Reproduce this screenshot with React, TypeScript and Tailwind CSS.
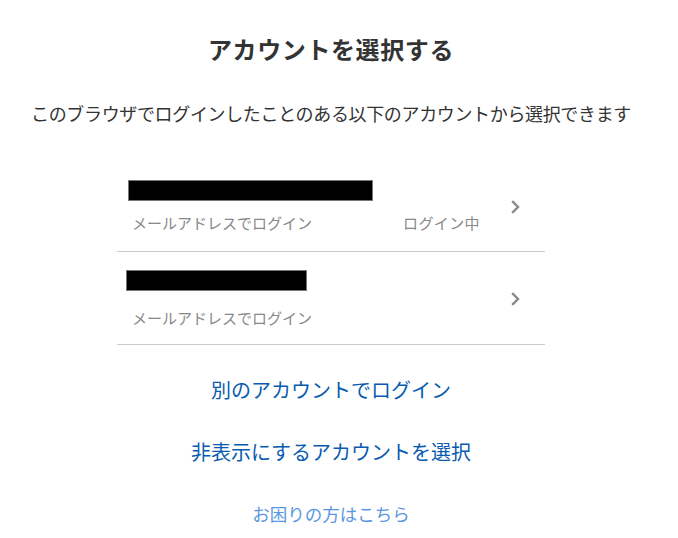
const FONT = "font-['Noto_Sans_CJK_JP','Noto_Sans',sans-serif]";

const Chevron = () => (
  <svg width="10" height="14" viewBox="0 0 10 14" className="shrink-0">
    <path d="M2.2 1.2 L8 7 L2.2 12.8" fill="none" stroke="#8a8a8a" strokeWidth="2.4" />
  </svg>
);

const accounts = [
  { barWidth: 245, barOffset: 11, gap: 12, pb: 18, current: true },
  { barWidth: 181, barOffset: 9, gap: 17, pb: 16, current: false },
];

export default function App() {
  return (
    <div className={`${FONT} w-[662px] min-h-[538px] bg-white text-[#333] flex flex-col items-center`}>
      <h1 className="pt-[33px] text-[24px] leading-[32px] font-bold tracking-[0.6px]">アカウントを選択する</h1>
      <p className="mt-[35px] text-[18px] leading-[26px] tracking-[-0.35px]">
        このブラウザでログインしたことのある以下のアカウントから選択できます
      </p>

      <ul className="mt-[36px] w-[428px]">
        {accounts.map((a, i) => (
          <li
            key={i}
            className="flex items-center border-b border-[#cccccc] pt-[18px] pr-[25px]"
            style={{ paddingBottom: a.pb }}
          >
            <div className="flex-1">
              <div
                className="h-[21px] bg-black border border-[#777]"
                style={{ width: a.barWidth, marginLeft: a.barOffset }}
              />
              <div
                className="flex items-center justify-between pl-[15px] pr-[30px] text-[15px] leading-[20px] text-[#888]"
                style={{ marginTop: a.gap }}
              >
                <span>メールアドレスでログイン</span>
                {a.current && <span className="tracking-[0.4px]">ログイン中</span>}
              </div>
            </div>
            <Chevron />
          </li>
        ))}
      </ul>

      <a className="mt-[31px] text-[20px] leading-[28px] text-[#0a5bb0] cursor-pointer">別のアカウントでログイン</a>
      <a className="mt-[34px] text-[20px] leading-[28px] text-[#0a5bb0] cursor-pointer">非表示にするアカウントを選択</a>
      <a className="mt-[36px] text-[17.5px] leading-[24px] text-[#5b97e0] cursor-pointer">お困りの方はこちら</a>
    </div>
  );
}
